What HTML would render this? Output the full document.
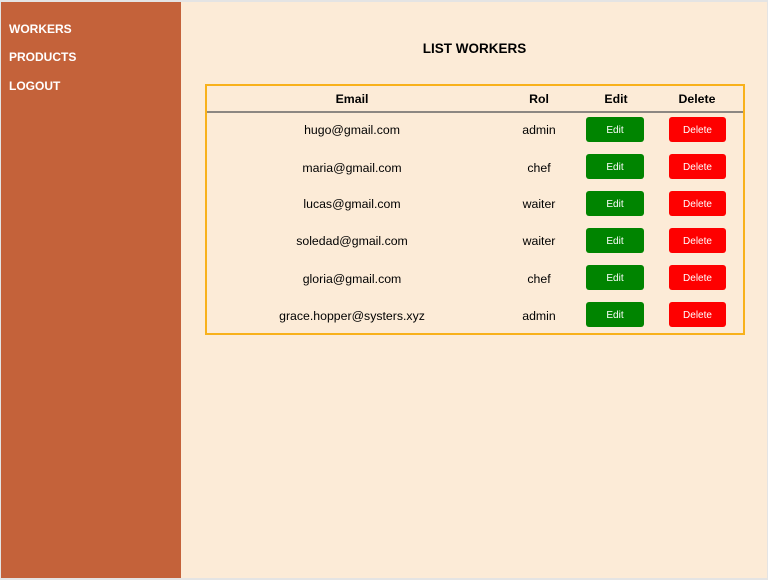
<!DOCTYPE html>
<html><head><style>
*{margin:0;padding:0;box-sizing:border-box}
body{width:768px;height:580px;background:#fcebd7;font-family:"Liberation Sans",Arial,sans-serif;position:relative;overflow:hidden}
.frame{position:absolute;left:0;top:0;width:768px;height:580px;border-top:2px solid #e4e4e4;border-left:1px solid #e4e4e4;border-right:1px solid #e4e4e4;border-bottom:2px solid #e4e4e4}
.side{position:absolute;left:1px;top:2px;width:180px;height:576px;background:#c4623a}
.side div{position:absolute;left:8px;color:#fff;font-weight:bold;font-size:12px}
h1{position:absolute;left:181px;width:587px;top:41px;text-align:center;font-size:13.5px;font-weight:bold;color:#000}
.tbl{position:absolute;left:205px;top:84px;width:540px;height:251px;border:2px solid #f8b11b}
.hd{position:absolute;top:0;height:27px;border-bottom:2px solid #8c8782;width:536px;left:0}
.c{position:absolute;text-align:center;font-size:12.3px;color:#000}
.b{font-weight:bold}
.btn{position:absolute;height:25px;border-radius:3px;color:#fff;font-size:10px;display:flex;align-items:center;justify-content:center;padding-top:2px}
.e{background:#008400;width:58px;left:379px}
.d{background:#fe0000;width:57px;left:462px}
</style></head><body>
<div class="frame"></div>
<div class="side"><div style="top:20px">WORKERS</div><div style="top:48px">PRODUCTS</div><div style="top:77px">LOGOUT</div></div>
<h1>LIST WORKERS</h1>
<div class="tbl">
<div class="hd"></div>
<div class="c b" style="left:0;width:290px;top:6px">Email</div>
<div class="c b" style="left:290px;width:84px;top:6px">Rol</div>
<div class="c b" style="left:374px;width:70px;top:6px">Edit</div>
<div class="c b" style="left:444px;width:92px;top:6px">Delete</div>

<div class="c" style="left:0;width:290px;top:37px">hugo@gmail.com</div><div class="c" style="left:290px;width:84px;top:37px">admin</div><div class="btn e" style="top:31px">Edit</div><div class="btn d" style="top:31px">Delete</div>
<div class="c" style="left:0;width:290px;top:75px">maria@gmail.com</div><div class="c" style="left:290px;width:84px;top:75px">chef</div><div class="btn e" style="top:68px">Edit</div><div class="btn d" style="top:68px">Delete</div>
<div class="c" style="left:0;width:290px;top:111px">lucas@gmail.com</div><div class="c" style="left:290px;width:84px;top:111px">waiter</div><div class="btn e" style="top:105px">Edit</div><div class="btn d" style="top:105px">Delete</div>
<div class="c" style="left:0;width:290px;top:148px">soledad@gmail.com</div><div class="c" style="left:290px;width:84px;top:148px">waiter</div><div class="btn e" style="top:142px">Edit</div><div class="btn d" style="top:142px">Delete</div>
<div class="c" style="left:0;width:290px;top:186px">gloria@gmail.com</div><div class="c" style="left:290px;width:84px;top:186px">chef</div><div class="btn e" style="top:179px">Edit</div><div class="btn d" style="top:179px">Delete</div>
<div class="c" style="left:0;width:290px;top:223px">grace.hopper@systers.xyz</div><div class="c" style="left:290px;width:84px;top:223px">admin</div><div class="btn e" style="top:216px">Edit</div><div class="btn d" style="top:216px">Delete</div>
</div>
</body></html>
